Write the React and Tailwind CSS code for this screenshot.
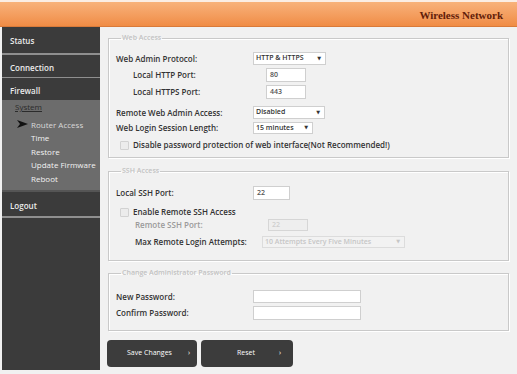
import React from "react";

const sans = { fontFamily: '"Open Sans", "DejaVu Sans", sans-serif' };

function Select({ text, w, disabled }) {
  return (
    <div
      className={`flex items-center justify-between h-full px-[2px] border ${
        disabled ? "border-[#dcdcdc] bg-[#f2f2f2] text-[#c6c6c6]" : "border-[#cfcfcf] bg-white text-[#333]"
      } text-[7px] ${w}`}
    >
      <span>{text}</span>
      <span className="text-[5px] pr-[2px]">▼</span>
    </div>
  );
}

function Input({ value, w, disabled }) {
  return (
    <div
      className={`flex items-center h-full px-[3px] border ${
        disabled ? "border-[#d6d6d6] bg-[#eeeeee] text-[#cfcfcf]" : "border-[#cfcfcf] bg-white text-[#555]"
      } text-[7px] ${w}`}
    >
      {value}
    </div>
  );
}

function Checkbox() {
  return <div className="w-[9px] h-[9px] border border-[#d2d2d2] bg-[#ececec] rounded-[1px]" />;
}

function Row({ label, indent, h, mt, children, muted }) {
  return (
    <div className={`flex items-center ${h} ${mt}`}>
      <div className={`w-[137px] shrink-0 ${indent} ${muted ? "text-[#9a9a9a]" : "text-[#333]"}`}>{label}</div>
      <div className="flex h-full">{children}</div>
    </div>
  );
}

function Box({ legend, mt, children, pb, pt }) {
  return (
    <fieldset
      className={`border border-[#c9c9c9] shadow-[inset_1px_1px_0_#fff,1px_1px_0_#fff] pl-[7px] ${mt} ${pb}`}
    >
      <legend className="ml-[5px] px-[1px] text-[7px] leading-[10px] text-[#c2c2c2]">{legend}</legend>
      <div className={pt}>{children}</div>
    </fieldset>
  );
}

export default function App() {
  return (
    <div className="w-[517px] h-[374px] overflow-hidden bg-[#f1f1f1] text-[8px] font-semibold" style={sans}>
      {/* header */}
      <div className="h-[27px] pt-[2px] bg-[#fbeee4]">
        <div className="h-full flex items-center justify-end pr-[14px] pt-[2px] bg-gradient-to-b from-[#f8b27a] to-[#f08c45] border-b border-[#d97a3a]">
          <span
            className="text-[11px] font-bold text-[#62200a]"
            style={{ fontFamily: '"Liberation Serif", "DejaVu Serif", serif' }}
          >
            Wireless Network
          </span>
        </div>
      </div>

      <div className="flex">
        {/* sidebar */}
        <div className="ml-[2px] w-[98px] h-[343px] bg-[#3b3b3b] text-[#ececec] flex flex-col">
          <div className="h-[26px] flex items-center pl-[8px] pt-[2px]">Status</div>
          <div className="h-[2px] bg-[#8f8f8f]" />
          <div className="h-[22px] flex items-center pl-[8px] pt-[4px]">Connection</div>
          <div className="h-[1px] bg-[#8f8f8f]" />
          <div className="h-[22px] flex items-center pl-[8px] pt-[4px]">Firewall</div>
          <div className="h-[90px] bg-[#6c6c6c] font-normal leading-[13.5px]">
            <div className="pl-[13px] text-[#2b2b2b] underline">System</div>
            <div className="mt-[4px] pl-[15px] flex items-center text-[#d9d9d9]">
              <svg width="11" height="8" viewBox="0 0 11 8" className="mr-[3px]">
                <path d="M0 0 L11 4 L0 8 L3 4 Z" fill="#111" />
              </svg>
              Router Access
            </div>
            <div className="pl-[29px] text-[#f2f2f2]">Time</div>
            <div className="pl-[29px] text-[#f2f2f2]">Restore</div>
            <div className="pl-[29px] text-[#f2f2f2]">Update Firmware</div>
            <div className="pl-[29px] text-[#f2f2f2]">Reboot</div>
          </div>
          <div className="h-[2px] bg-[#555]" />
          <div className="h-[24px] flex items-center pl-[8px] pt-[4px]">Logout</div>
          <div className="h-[2px] bg-[#8f8f8f]" />
        </div>

        {/* main */}
        <div className="flex-1 pl-[8px] pr-[8px] pt-[6px]">
          <Box legend="Web Access" pt="pt-[9px]" pb="pb-[6px]">
            <Row label="Web Admin Protocol:" h="h-[13px]">
              <Select text="HTTP & HTTPS" w="w-[73px]" />
            </Row>
            <Row label="Local HTTP Port:" indent="pl-[17px]" h="h-[14px]" mt="mt-[3px]">
              <div className="ml-[13px] h-full">
                <Input value="80" w="w-[40px]" />
              </div>
            </Row>
            <Row label="Local HTTPS Port:" indent="pl-[17px]" h="h-[14px]" mt="mt-[3px]">
              <div className="ml-[13px] h-full">
                <Input value="443" w="w-[40px]" />
              </div>
            </Row>
            <Row label="Remote Web Admin Access:" h="h-[13px]" mt="mt-[7px]">
              <Select text="Disabled" w="w-[72px]" />
            </Row>
            <Row label="Web Login Session Length:" h="h-[12px]" mt="mt-[3px]">
              <Select text="15 minutes" w="w-[60px]" />
            </Row>
            <div className="flex items-center h-[12px] mt-[5px] pl-[4px] gap-[4px] text-[#333]">
              <Checkbox />
              <span>Disable password protection of web interface(Not Recommended!)</span>
            </div>
          </Box>

          <Box legend="SSH Access" mt="mt-[8px]" pt="pt-[10px]" pb="pb-[12px]">
            <Row label="Local SSH Port:" h="h-[14px]">
              <Input value="22" w="w-[37px]" />
            </Row>
            <div className="flex items-center h-[12px] mt-[6px] pl-[4px] gap-[4px] text-[#333]">
              <Checkbox />
              <span>Enable Remote SSH Access</span>
            </div>
            <Row label="Remote SSH Port:" indent="pl-[19px]" h="h-[12px]" mt="mt-[1px]" muted>
              <div className="ml-[15px] h-full">
                <Input value="22" w="w-[40px]" disabled />
              </div>
            </Row>
            <Row label="Max Remote Login Attempts:" indent="pl-[19px]" h="h-[12px]" mt="mt-[5px]">
              <div className="ml-[9px] h-full">
                <Select text="10 Attempts Every Five Minutes" w="w-[143px]" disabled />
              </div>
            </Row>
          </Box>

          <Box legend="Change Administrator Password" mt="mt-[7px]" pt="pt-[12px]" pb="pb-[10px]">
            <Row label="New Password:" h="h-[13px]">
              <Input value="" w="w-[108px]" />
            </Row>
            <Row label="Confirm Password:" h="h-[14px]" mt="mt-[3px]">
              <Input value="" w="w-[108px]" />
            </Row>
          </Box>

          <div className="flex gap-[4px] mt-[9px] -ml-[1px] text-white font-normal text-[7px]">
            <button className="w-[90px] h-[27px] rounded-[4px] bg-[#3c3c3c] flex items-center pl-[20px]">
              <span>Save Changes</span>
              <span className="ml-[16px]">›</span>
            </button>
            <button className="w-[92px] h-[27px] rounded-[4px] bg-[#3c3c3c] flex items-center pl-[36px]">
              <span>Reset</span>
              <span className="ml-[24px]">›</span>
            </button>
          </div>
        </div>
      </div>
    </div>
  );
}
